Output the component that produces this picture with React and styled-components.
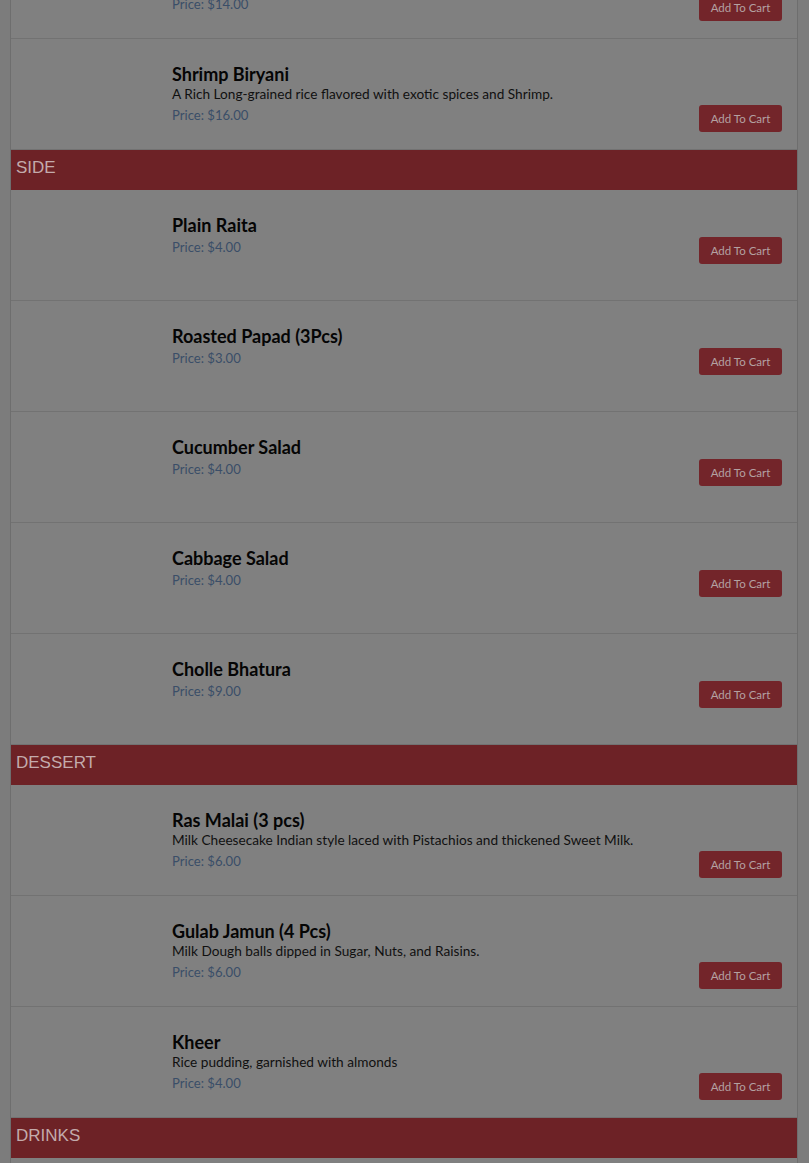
import styled, { createGlobalStyle } from "styled-components";

const GlobalStyle = createGlobalStyle`
  html, body {
    margin: 0;
    padding: 0;
    background: #7c7c7c;
    overflow: hidden;
  }
`;

const Page = styled.div`
  height: 1163px;
  overflow: hidden;
  font-family: Lato, "Open Sans", sans-serif;
`;

// the page is scrolled, the first item is half off screen
const Menu = styled.div`
  margin: -72px 11px 0 10px;
  background: #808080;
  border-left: 1px solid #6e6e6e;
  border-right: 1px solid #6e6e6e;
`;

const SectionTitle = styled.h2`
  margin: 0;
  height: 40px;
  box-sizing: border-box;
  padding: 8px 5px 12px;
  background: #6d2226;
  color: #c3abac;
  font-family: "Liberation Sans", Arial, sans-serif;
  font-weight: 400;
  font-size: 17px;
  line-height: 20px;
`;

const Item = styled.div`
  display: flex;
  min-height: 110px;
  border-bottom: 1px solid #727272;
`;

const Thumb = styled.div`
  flex: 0 0 161px;
`;

const Body = styled.div`
  flex: 1;
  display: flex;
  align-items: flex-end;
  align-self: flex-start;
  padding: 24px 15px 0 0;
`;

const Info = styled.div`
  flex: 1;
  padding-bottom: 7px;
`;

const Name = styled.div`
  font-weight: 700;
  font-size: 18px;
  line-height: 22px;
  color: #050505;
`;

const Desc = styled.div`
  font-size: 13.65px;
  line-height: 19px;
  color: #101010;
`;

const Price = styled.div`
  margin-top: 1px;
  font-size: 13.1px;
  line-height: 20px;
  color: #3a4e68;
`;

const CartButton = styled.button`
  width: 83px;
  height: 27px;
  padding: 0;
  border: none;
  border-radius: 3px;
  background: #73252a;
  color: #b3a1a2;
  font-family: Lato, "Open Sans", sans-serif;
  font-size: 11.5px;
  cursor: pointer;
`;

const sections = [
  {
    title: null,
    items: [
      {
        name: "Goat Biryani",
        desc: "A Rich Long-grained rice flavored with exotic spices and Goat.",
        price: 14,
      },
      {
        name: "Shrimp Biryani",
        desc: "A Rich Long-grained rice flavored with exotic spices and Shrimp.",
        price: 16,
      },
    ],
  },
  {
    title: "SIDE",
    items: [
      { name: "Plain Raita", price: 4 },
      { name: "Roasted Papad (3Pcs)", price: 3 },
      { name: "Cucumber Salad", price: 4 },
      { name: "Cabbage Salad", price: 4 },
      { name: "Cholle Bhatura", price: 9 },
    ],
  },
  {
    title: "DESSERT",
    items: [
      {
        name: "Ras Malai (3 pcs)",
        desc: "Milk Cheesecake Indian style laced with Pistachios and thickened Sweet Milk.",
        price: 6,
      },
      {
        name: "Gulab Jamun (4 Pcs)",
        desc: "Milk Dough balls dipped in Sugar, Nuts, and Raisins.",
        price: 6,
      },
      {
        name: "Kheer",
        desc: "Rice pudding, garnished with almonds",
        price: 4,
      },
    ],
  },
  {
    title: "DRINKS",
    items: [
      { name: "Mango Lassi", price: 4 },
      { name: "Masala Chai", price: 3 },
    ],
  },
];

function MenuItem({ item }) {
  return (
    <Item>
      <Thumb />
      <Body>
        <Info>
          <Name>{item.name}</Name>
          {item.desc && <Desc>{item.desc}</Desc>}
          <Price>Price: ${item.price.toFixed(2)}</Price>
        </Info>
        <CartButton>Add To Cart</CartButton>
      </Body>
    </Item>
  );
}

export default function App() {
  return (
    <Page>
      <GlobalStyle />
      <Menu>
        {sections.map((section, i) => (
          <div key={i}>
            {section.title && <SectionTitle>{section.title}</SectionTitle>}
            {section.items.map((item) => (
              <MenuItem key={item.name} item={item} />
            ))}
          </div>
        ))}
      </Menu>
    </Page>
  );
}
